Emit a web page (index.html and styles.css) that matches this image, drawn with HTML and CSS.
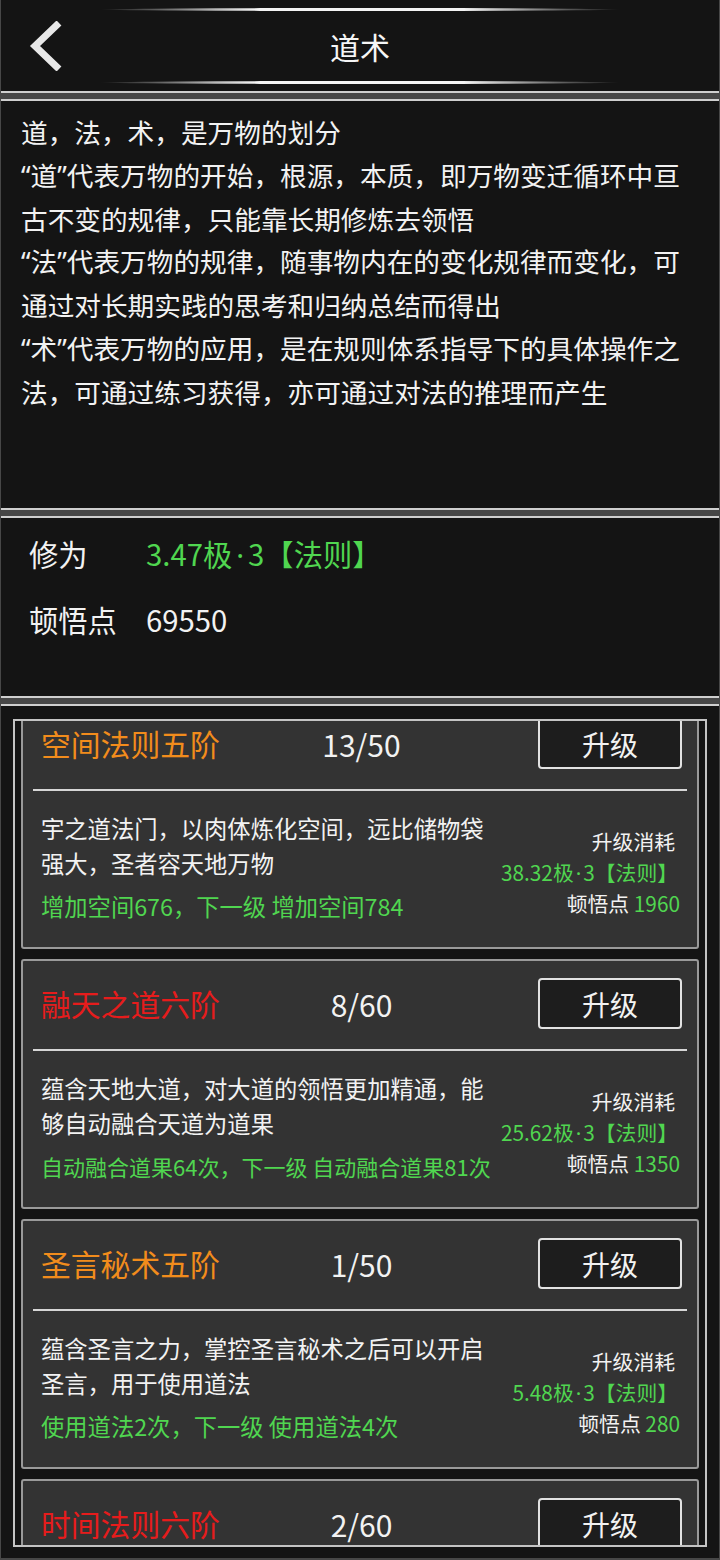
FILE: index.html
```html
<!DOCTYPE html>
<html lang="zh-CN">
<head>
<meta charset="utf-8">
<title>道术</title>
<link rel="stylesheet" href="styles.css">
</head>
<body>
<div class="app">
  <header class="topbar">
    <div class="glow"></div>
    <div class="bar-row">
      <span class="back">
        <svg width="40" height="50" viewBox="0 0 40 50"><path d="M31 2 L7 25 L31 48" fill="none" stroke="#e8e8e8" stroke-width="7" stroke-linejoin="miter"/></svg>
      </span>
      <h1 class="title">道术</h1>
      <span></span>
    </div>
    <div class="glow"></div>
  </header>

  <section class="panel intro">
    <p class="intro-line">道，法，术，是万物的划分</p>
    <p class="intro-line"><span class="q">“</span>道<span class="q">”</span>代表万物的开始，根源，本质，即万物变迁循环中亘</p>
    <p class="intro-line">古不变的规律，只能靠长期修炼去领悟</p>
    <p class="intro-line"><span class="q">“</span>法<span class="q">”</span>代表万物的规律，随事物内在的变化规律而变化，可</p>
    <p class="intro-line">通过对长期实践的思考和归纳总结而得出</p>
    <p class="intro-line"><span class="q">“</span>术<span class="q">”</span>代表万物的应用，是在规则体系指导下的具体操作之</p>
    <p class="intro-line">法，可通过练习获得，亦可通过对法的推理而产生</p>
  </section>

  <section class="panel stats">
    <span class="stat-label">修为</span>
    <span class="stat-value green">3.47极<span class="q dot">·</span>3【法则】</span>
    <span class="stat-label">顿悟点</span>
    <span class="stat-value">69550</span>
  </section>

  <section class="panel list-panel">
    <div class="list-box">
      <div class="list-track">
        <div class="card">
          <div class="card-head">
            <span class="card-name orange">空间法则五阶</span>
            <span class="count">13/50</span>
            <button class="up-btn">升级</button>
          </div>
          <div class="divider"></div>
          <div class="card-body">
            <div class="desc-col">
              <p class="desc">宇之道法门，以肉体炼化空间，远比储物袋</p>
              <p class="desc">强大，圣者容天地万物</p>
              <p class="effect green">增加空间676，下一级 增加空间784</p>
            </div>
            <div class="cost-col">
              <div class="cost-head">升级消耗</div>
              <div class="green cost-mid">38.32极<span class="q dot-sm">·</span>3【法则】</div>
              <div>顿悟点 <span class="green">1960</span></div>
            </div>
          </div>
        </div>

        <div class="card">
          <div class="card-head">
            <span class="card-name red">融天之道六阶</span>
            <span class="count">8/60</span>
            <button class="up-btn">升级</button>
          </div>
          <div class="divider"></div>
          <div class="card-body">
            <div class="desc-col">
              <p class="desc">蕴含天地大道，对大道的领悟更加精通，能</p>
              <p class="desc">够自动融合天道为道果</p>
              <p class="effect effect-fit green">自动融合道果64次，下一级 自动融合道果81次</p>
            </div>
            <div class="cost-col">
              <div class="cost-head">升级消耗</div>
              <div class="green cost-mid">25.62极<span class="q dot-sm">·</span>3【法则】</div>
              <div>顿悟点 <span class="green">1350</span></div>
            </div>
          </div>
        </div>

        <div class="card">
          <div class="card-head">
            <span class="card-name orange">圣言秘术五阶</span>
            <span class="count">1/50</span>
            <button class="up-btn">升级</button>
          </div>
          <div class="divider"></div>
          <div class="card-body">
            <div class="desc-col">
              <p class="desc">蕴含圣言之力，掌控圣言秘术之后可以开启</p>
              <p class="desc">圣言，用于使用道法</p>
              <p class="effect green">使用道法2次，下一级 使用道法4次</p>
            </div>
            <div class="cost-col">
              <div class="cost-head">升级消耗</div>
              <div class="green cost-mid">5.48极<span class="q dot-sm">·</span>3【法则】</div>
              <div>顿悟点 <span class="green">280</span></div>
            </div>
          </div>
        </div>

        <div class="card">
          <div class="card-head">
            <span class="card-name red">时间法则六阶</span>
            <span class="count">2/60</span>
            <button class="up-btn">升级</button>
          </div>
          <div class="divider"></div>
        </div>
      </div>
    </div>
  </section>
</div>
</body>
</html>
```

FILE: styles.css
```css
html, body {
  margin: 0;
  padding: 0;
  background: #474747;
}

body {
  width: 720px;
  height: 1560px;
  overflow: hidden;
  font-family: "Noto Sans CJK SC", "Noto Sans", sans-serif;
  color: #f2f2f2;
}

.app {
  display: flex;
  flex-direction: column;
  gap: 6px;
  height: 1560px;
  box-sizing: border-box;
  padding: 0 1px 2px;
}

.green { color: #50d650; }
.orange { color: #f28c1c; }
.red { color: #e61c1c; }

.q {
  font-family: "Noto Sans", sans-serif;
}

.dot {
  margin: 0 4px;
}

.dot-sm {
  margin: 0 2px;
}

/* header */
.topbar {
  flex: none;
  height: 93px;
  box-sizing: border-box;
  background: #141414;
  border-bottom: 2px solid #cfcfcf;
  display: flex;
  flex-direction: column;
  align-items: center;
  padding-top: 8px;
}

.glow {
  width: 520px;
  height: 3px;
  border-radius: 50%;
  background: linear-gradient(90deg,
    rgba(255,255,255,0) 0%,
    rgba(255,255,255,0.35) 12%,
    #f4f4f4 30%,
    #f4f4f4 70%,
    rgba(255,255,255,0.35) 88%,
    rgba(255,255,255,0) 100%);
}

.bar-row {
  height: 70px;
  width: 100%;
  display: grid;
  grid-template-columns: 1fr auto 1fr;
  align-items: center;
}

.back {
  display: flex;
  padding-left: 27px;
}

.title {
  margin: 0;
  font-size: 30px;
  font-weight: 400;
  line-height: 1;
  color: #f6f6f6;
}

/* panels */
.panel {
  flex: none;
  background: #141414;
  border-top: 2px solid #cfcfcf;
  border-bottom: 2px solid #cfcfcf;
  box-sizing: border-box;
}

.intro {
  height: 411px;
  padding: 10px 0 0 20px;
}

.intro-line {
  margin: 0;
  font-size: 26.67px;
  line-height: 42.8px;
  white-space: nowrap;
}

.stats {
  height: 182px;
  padding: 15px 0 0 28px;
  display: grid;
  grid-template-columns: 117px auto;
  row-gap: 24px;
  align-content: start;
  font-size: 29.3px;
  line-height: 40px;
}

.list-panel {
  flex: 1;
  min-height: 0;
  border-bottom: none;
  padding: 13px 12px 11px;
  display: flex;
}

.list-box {
  flex: 1;
  border: 2px solid #c4c4c4;
  overflow: hidden;
  padding: 0 6px;
  background: #141414;
}

.list-track {
  margin-top: -22px;
  display: flex;
  flex-direction: column;
  gap: 10px;
}

/* cards */
.card {
  background: #333333;
  border: 2px solid #9a9a9a;
  border-radius: 3px;
  padding: 17px 15px 23px 18px;
}

.card-head {
  display: grid;
  grid-template-columns: 1fr auto 1fr;
  align-items: center;
  height: 51px;
}

.card-name {
  font-size: 29.8px;
  line-height: 1;
  white-space: nowrap;
}

.count {
  font-size: 30px;
  line-height: 1;
  color: #f2f2f2;
}

.up-btn {
  justify-self: end;
  width: 144px;
  height: 51px;
  box-sizing: border-box;
  border: 2px solid #e2e2e2;
  border-radius: 4px;
  background: #1d1d1d;
  color: #f2f2f2;
  font-family: inherit;
  font-size: 28px;
  line-height: 1;
  display: flex;
  align-items: center;
  justify-content: center;
  padding: 0;
}

.divider {
  height: 2px;
  background: #d6d6d6;
  margin: 20px -5px 0 -8px;
}

.card-body {
  display: flex;
  justify-content: space-between;
  align-items: flex-start;
}

.desc-col {
  padding-top: 20px;
}

.desc {
  margin: 0;
  font-size: 23.3px;
  line-height: 35px;
  white-space: nowrap;
}

.effect {
  margin: 8px 0 0;
  font-size: 23.3px;
  line-height: 35px;
  white-space: nowrap;
}

.effect-fit {
  font-size: 22px;
}

.cost-col {
  padding-top: 35px;
  margin-right: 2px;
  text-align: right;
  font-size: 20.8px;
  line-height: 30.5px;
  white-space: nowrap;
}

.cost-head {
  padding-right: 5px;
}

.cost-mid {
  padding-right: 2px;
}
```
